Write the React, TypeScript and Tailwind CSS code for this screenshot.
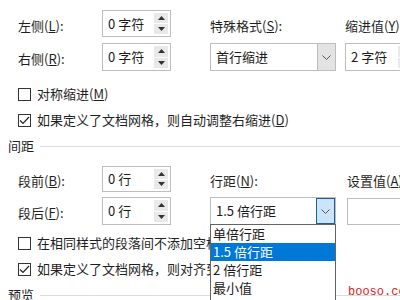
import React from "react";

const font = { fontFamily: '"Noto Sans CJK SC", "Noto Sans", sans-serif' };

function Tri({ up }: { up?: boolean }) {
  return (
    <svg width="7" height="4" viewBox="0 0 7 4" className="block">
      {up ? <path d="M0 4 L3.5 0 L7 4 Z" fill="#333" /> : <path d="M0 0 L3.5 4 L7 0 Z" fill="#333" />}
    </svg>
  );
}

function Spinner({ value, textW }: { value: string; textW: string }) {
  return (
    <div className="flex h-full border border-[#bdbdbd] bg-white">
      <div className={`${textW} flex shrink-0 items-center pl-[5px] text-[13px] text-[#1a1a1a]`}>{value}</div>
      <div className="flex w-[16px] shrink-0 flex-col gap-[1px] py-[2px] pr-[2px]">
        <div className="flex flex-1 items-center justify-center bg-[#e9e9e9]">
          <Tri up />
        </div>
        <div className="flex flex-1 items-center justify-center bg-[#e9e9e9]">
          <Tri />
        </div>
      </div>
    </div>
  );
}

function Chevron() {
  return (
    <svg width="9" height="5" viewBox="0 0 9 5">
      <path d="M0.5 0.5 L4.5 4.5 L8.5 0.5" fill="none" stroke="#555" strokeWidth="1" />
    </svg>
  );
}

function Label({ text, k }: { text: string; k: string }) {
  return (
    <span className="whitespace-nowrap text-[13px] text-[#1f1f1f]">
      {text}(<span className="underline">{k}</span>):
    </span>
  );
}

function Check({ checked, text, k }: { checked?: boolean; text: string; k: string }) {
  return (
    <div className="flex h-[26px] items-center pl-[18px]">
      <div className="flex h-[13px] w-[13px] shrink-0 items-center justify-center border border-[#333] bg-white">
        {checked && (
          <svg width="11" height="9" viewBox="0 0 11 9">
            <path d="M1 4.5 L4 7.5 L10 1" fill="none" stroke="#222" strokeWidth="1.2" />
          </svg>
        )}
      </div>
      <span className="ml-[6px] whitespace-nowrap text-[13px] text-[#1f1f1f]">
        {text}(<span className="underline">{k}</span>)
      </span>
    </div>
  );
}

function Header({ text }: { text: string }) {
  return (
    <div className="flex h-[26px] items-center pl-[8px]">
      <span className="text-[13px] text-[#1f1f1f]">{text}</span>
      <div className="ml-[6px] h-px flex-1 bg-[#dcdcdc]" />
    </div>
  );
}

export default function App() {
  return (
    <div className="relative h-[300px] w-[400px] overflow-hidden bg-white" style={font}>
      {/* Row A */}
      <div className="mt-[10px] flex h-[27px] items-center">
        <div className="w-[102px] shrink-0 pl-[18px]">
          <Label text="左侧" k="L" />
        </div>
        <div className="h-full w-[69px] shrink-0">
          <Spinner value="0 字符" textW="w-[51px]" />
        </div>
        <div className="w-[39px] shrink-0" />
        <div className="w-[135px] shrink-0">
          <Label text="特殊格式" k="S" />
        </div>
        <div className="shrink-0">
          <Label text="缩进值" k="Y" />
        </div>
      </div>
      {/* Row B */}
      <div className="mt-[6px] flex h-[28px] items-center">
        <div className="w-[102px] shrink-0 pl-[18px]">
          <Label text="右侧" k="R" />
        </div>
        <div className="h-full w-[69px] shrink-0">
          <Spinner value="0 字符" textW="w-[51px]" />
        </div>
        <div className="w-[39px] shrink-0" />
        <div className="flex h-full w-[126px] shrink-0 border border-[#bdbdbd] bg-white">
          <div className="flex flex-1 items-center pl-[5px] text-[13px] text-[#1a1a1a]">首行缩进</div>
          <div className="flex w-[18px] items-center justify-center border-l border-[#bdbdbd] bg-[#e3e3e3]">
            <Chevron />
          </div>
        </div>
        <div className="w-[9px] shrink-0" />
        <div className="h-full w-[80px] shrink-0">
          <Spinner value="2 字符" textW="w-[52px]" />
        </div>
      </div>
      <div className="mt-[10px]" />
      <Check text="对称缩进" k="M" />
      <Check checked text="如果定义了文档网格，则自动调整右缩进" k="D" />
      <Header text="间距" />
      {/* Row C */}
      <div className="mt-[7px] flex h-[26px] items-center">
        <div className="w-[102px] shrink-0 pl-[18px]">
          <Label text="段前" k="B" />
        </div>
        <div className="h-full w-[69px] shrink-0">
          <Spinner value="0 行" textW="w-[51px]" />
        </div>
        <div className="w-[39px] shrink-0" />
        <div className="w-[137px] shrink-0">
          <Label text="行距" k="N" />
        </div>
        <div className="shrink-0">
          <Label text="设置值" k="A" />
        </div>
      </div>
      {/* Row D */}
      <div className="mt-[5px] flex h-[28px] items-center">
        <div className="w-[102px] shrink-0 pl-[18px]">
          <Label text="段后" k="F" />
        </div>
        <div className="h-full w-[69px] shrink-0">
          <Spinner value="0 行" textW="w-[51px]" />
        </div>
        <div className="w-[39px] shrink-0" />
        <div className="relative z-10 flex h-full w-[126px] shrink-0 border border-[#bdbdbd] bg-white">
          <div className="flex flex-1 items-center pl-[5px] text-[13px] text-[#1a1a1a]">1.5 倍行距</div>
          <div className="flex w-[19px] items-center justify-center border border-[#1c5fa0] bg-[#cce4f7]">
            <Chevron />
          </div>
          <div className="absolute left-[-1px] top-full h-[90px] w-[126px] border border-[#646464] bg-white text-[13px] text-[#1a1a1a]">
            <div className="flex h-[18px] items-center pl-[2px]">单倍行距</div>
            <div className="flex h-[18px] items-center bg-[#0078d7] pl-[2px] text-white">1.5 倍行距</div>
            <div className="flex h-[18px] items-center pl-[2px]">2 倍行距</div>
            <div className="flex h-[18px] items-center pl-[2px]">最小值</div>
          </div>
        </div>
        <div className="w-[11px] shrink-0" />
        <div className="h-[27px] w-[80px] shrink-0">
          <Spinner value="" textW="w-[52px]" />
        </div>
      </div>
      <div className="mt-[5px]" />
      <Check text="在相同样式的段落间不添加空格" k="C" />
      <Check checked text="如果定义了文档网格，则对齐到网格" k="W" />
      <Header text="预览" />
      <div
        className="absolute left-[348px] top-[283px] z-20 text-[12px] text-[#e0201c]"
        style={{ fontFamily: '"Liberation Mono", monospace' }}
      >
        booso.com
      </div>
    </div>
  );
}
